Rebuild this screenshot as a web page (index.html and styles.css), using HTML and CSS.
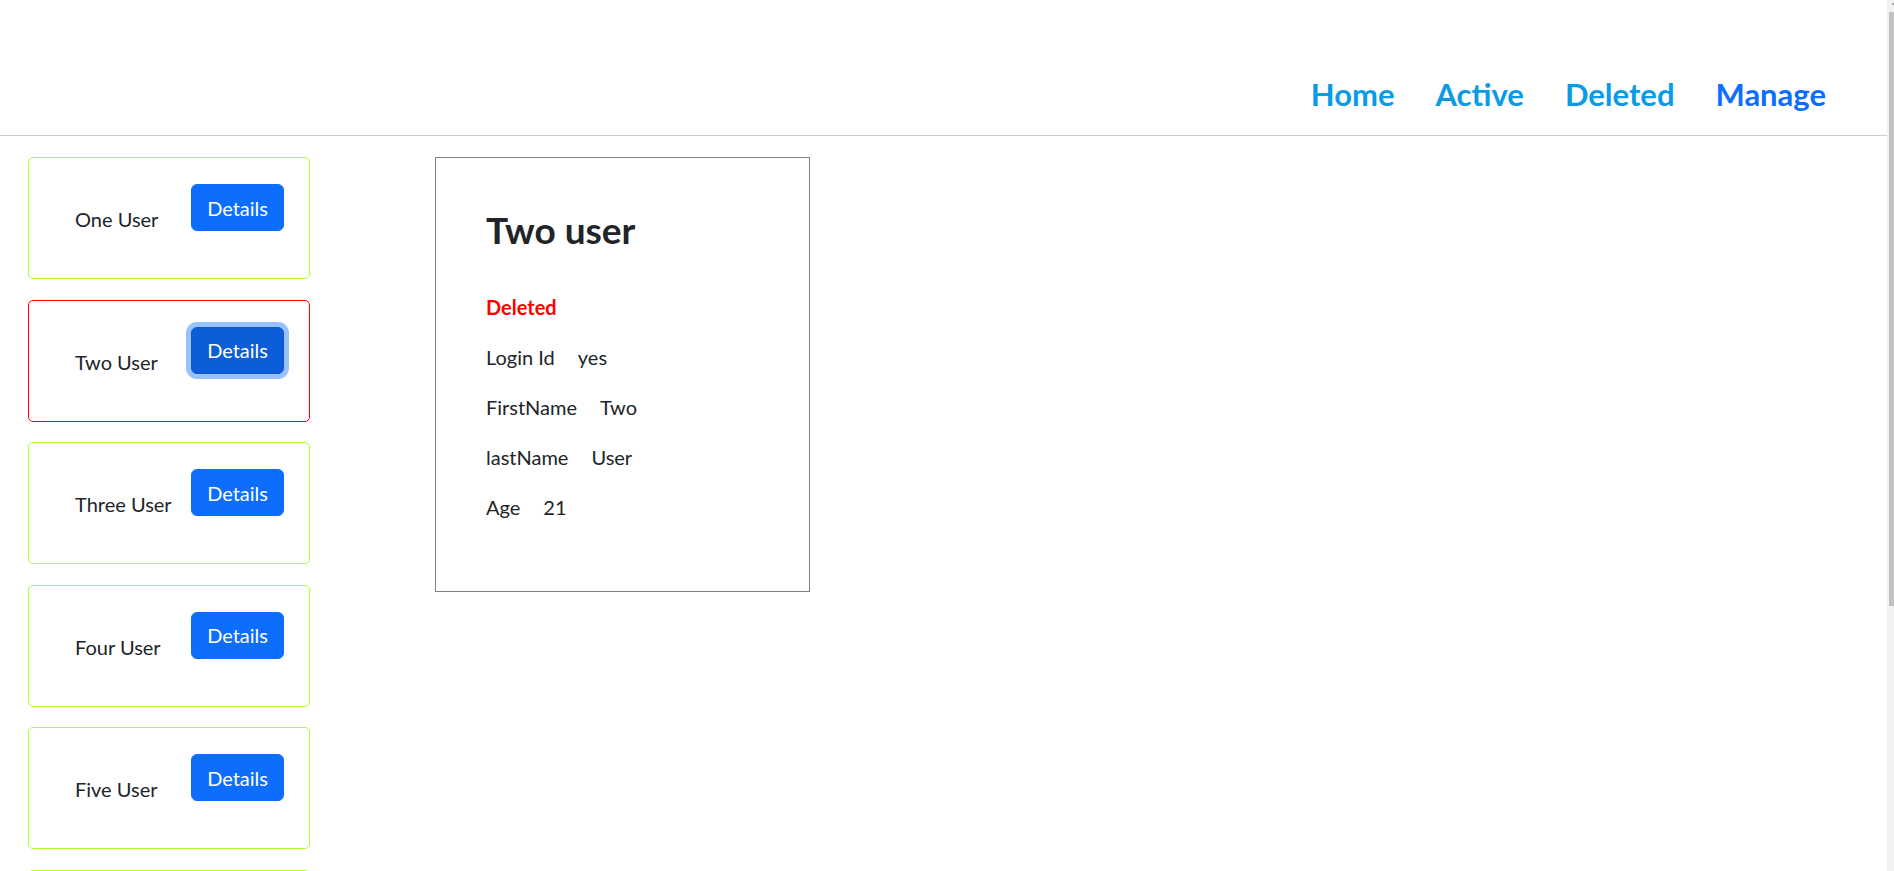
FILE: index.html
```html
<!DOCTYPE html>
<html lang="en">
<head>
<meta charset="utf-8">
<title>Users</title>
<link rel="stylesheet" href="styles.css">
</head>
<body>
<div class="page">
  <header class="header">
    <nav class="nav">
      <a class="nav-link" href="#">Home</a>
      <a class="nav-link" href="#">Active</a>
      <a class="nav-link" href="#">Deleted</a>
      <a class="nav-link nav-link-current" href="#">Manage</a>
    </nav>
  </header>
  <main class="main">
    <section class="user-list">
      <div class="user-card">
        <span class="user-name">One User</span>
        <button class="btn">Details</button>
      </div>
      <div class="user-card user-card-deleted">
        <span class="user-name">Two User</span>
        <button class="btn btn-focus">Details</button>
      </div>
      <div class="user-card">
        <span class="user-name">Three User</span>
        <button class="btn">Details</button>
      </div>
      <div class="user-card">
        <span class="user-name">Four User</span>
        <button class="btn">Details</button>
      </div>
      <div class="user-card">
        <span class="user-name">Five User</span>
        <button class="btn">Details</button>
      </div>
      <div class="user-card"></div>
    </section>
    <section class="detail">
      <h2 class="detail-title">Two user</h2>
      <p class="detail-status">Deleted</p>
      <p class="detail-row"><span class="detail-label">Login Id</span><span>yes</span></p>
      <p class="detail-row"><span class="detail-label">FirstName</span><span>Two</span></p>
      <p class="detail-row"><span class="detail-label">lastName</span><span>User</span></p>
      <p class="detail-row"><span class="detail-label">Age</span><span>21</span></p>
    </section>
  </main>
</div>
<div class="scrollbar"><div class="scrollbar-arrow"></div><div class="scrollbar-thumb"></div></div>
</body>
</html>
```
FILE: styles.css
```css
html, body {
  margin: 0;
  padding: 0;
  overflow: hidden;
  height: 871px;
  background: #fff;
}
body {
  font-family: Lato, "Open Sans", sans-serif;
  font-size: 20px;
  line-height: 30px;
  color: #212529;
}
.page {
  width: 1887px;
}
.header {
  height: 135px;
  border-bottom: 1px solid #cccccc;
  box-sizing: content-box;
}
.nav {
  display: flex;
  justify-content: flex-end;
  gap: 41px;
  padding-top: 76px;
  padding-right: 61px;
}
.nav-link {
  font-size: 31px;
  line-height: 36px;
  font-weight: 700;
  color: #0a9be6;
  text-decoration: none;
}
.nav-link-current {
  color: #0d6efd;
}
.main {
  display: flex;
  align-items: flex-start;
  gap: 125px;
  padding: 21px 0 0 28px;
}
.user-list {
  display: flex;
  flex-direction: column;
  gap: 20.6px;
  width: 282px;
}
.user-card {
  box-sizing: border-box;
  height: 122px;
  flex: none;
  border: 1px solid #adff2f;
  border-radius: 5px;
  display: flex;
  justify-content: space-between;
  align-items: flex-start;
  padding: 26px 25px 0 46px;
}
.user-card-deleted {
  border-color: #ff0000;
}
.user-name {
  margin-top: 20px;
}
.btn {
  font-family: inherit;
  font-size: 20px;
  line-height: 30px;
  color: #fff;
  background: #0d6efd;
  border: 1px solid #0d6efd;
  border-radius: 6px;
  padding: 7.5px 15px;
  cursor: pointer;
}
.btn-focus {
  background: #0b5ed7;
  border-color: #0a58ca;
  box-shadow: 0 0 0 5px #98c1fe;
}
.detail {
  box-sizing: border-box;
  width: 375px;
  height: 435px;
  border: 1px solid #808080;
  padding: 48px 50px 0 50px;
}
.detail-title {
  margin: 0 0 38px 0;
  font-size: 37px;
  line-height: 48px;
  font-weight: 700;
  color: #212529;
}
.detail-status {
  margin: 0 0 20px 0;
  font-weight: 700;
  color: #ff0000;
}
.detail-row {
  margin: 0 0 20px 0;
}
.detail-label {
  margin-right: 23px;
}
.scrollbar {
  position: fixed;
  top: 0;
  right: 0;
  width: 7px;
  height: 871px;
  background: #f1f1f1;
}
.scrollbar-arrow {
  position: absolute;
  top: 3px;
  right: 0;
  width: 2px;
  height: 2px;
  background: #a3a3a3;
}
.scrollbar-thumb {
  position: absolute;
  top: 12px;
  left: 2px;
  width: 5px;
  height: 594px;
  background: #c1c1c1;
}
```
